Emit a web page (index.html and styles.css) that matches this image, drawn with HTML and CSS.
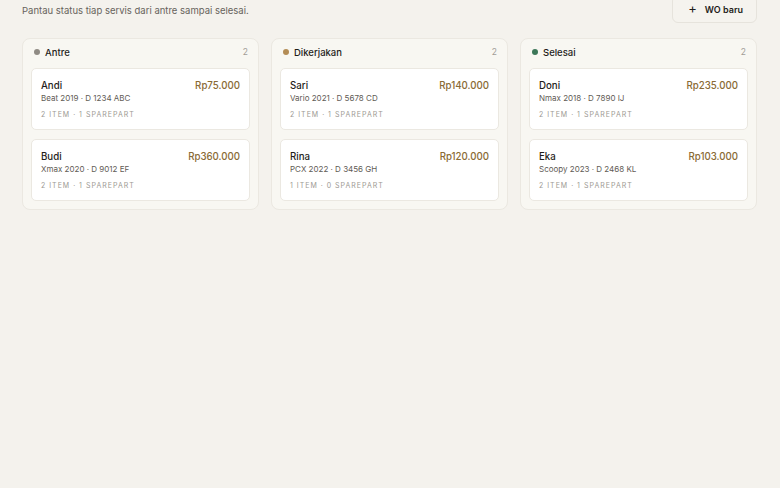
FILE: index.html
```html
<!DOCTYPE html>
<html lang="id">
  <head>
    <meta charset="UTF-8" />
    <meta name="viewport" content="width=device-width, initial-scale=1.0" />
    <title>Work Order</title>
    <link rel="stylesheet" href="styles.css">
  </head>
  <body>
    <div class="page">
      <div class="toolbar">
        <p class="lead">Pantau status tiap servis dari antre sampai selesai.</p>
        <button class="btn-new"><span class="plus">+</span> WO baru</button>
      </div>

      <div class="board">
        <div class="column">
          <div class="column-head">
            <span class="dot queue"></span>
            <span class="column-title">Antre</span>
            <span class="count">2</span>
          </div>
          <div class="card">
            <div class="card-top"><span class="name">Andi</span><span class="price">Rp75.000</span></div>
            <div class="vehicle">Beat 2019 · D 1234 ABC</div>
            <div class="meta">2 item · 1 sparepart</div>
          </div>
          <div class="card">
            <div class="card-top"><span class="name">Budi</span><span class="price">Rp360.000</span></div>
            <div class="vehicle">Xmax 2020 · D 9012 EF</div>
            <div class="meta">2 item · 1 sparepart</div>
          </div>
        </div>

        <div class="column">
          <div class="column-head">
            <span class="dot work"></span>
            <span class="column-title">Dikerjakan</span>
            <span class="count">2</span>
          </div>
          <div class="card">
            <div class="card-top"><span class="name">Sari</span><span class="price">Rp140.000</span></div>
            <div class="vehicle">Vario 2021 · D 5678 CD</div>
            <div class="meta">2 item · 1 sparepart</div>
          </div>
          <div class="card">
            <div class="card-top"><span class="name">Rina</span><span class="price">Rp120.000</span></div>
            <div class="vehicle">PCX 2022 · D 3456 GH</div>
            <div class="meta">1 item · 0 sparepart</div>
          </div>
        </div>

        <div class="column">
          <div class="column-head">
            <span class="dot done"></span>
            <span class="column-title">Selesai</span>
            <span class="count">2</span>
          </div>
          <div class="card">
            <div class="card-top"><span class="name">Doni</span><span class="price">Rp235.000</span></div>
            <div class="vehicle">Nmax 2018 · D 7890 IJ</div>
            <div class="meta">2 item · 1 sparepart</div>
          </div>
          <div class="card">
            <div class="card-top"><span class="name">Eka</span><span class="price">Rp103.000</span></div>
            <div class="vehicle">Scoopy 2023 · D 2468 KL</div>
            <div class="meta">2 item · 1 sparepart</div>
          </div>
        </div>
      </div>
    </div>
  </body>
</html>
```

FILE: styles.css
```css
* {
  margin: 0;
  padding: 0;
  box-sizing: border-box;
}
html, body {
  height: 100%;
  background: #f4f2ed;
  font-family: Inter, "Noto Sans", sans-serif;
  color: #1f1d1a;
}
.page {
  padding: 0 23px 0 22px;
}
.toolbar {
  display: flex;
  justify-content: space-between;
  align-items: center;
  margin-top: -5px;
}
.lead {
  font-size: 9.5px;
  line-height: 14px;
  color: #67635c;
  padding-top: 4px;
}
.btn-new {
  display: flex;
  align-items: center;
  gap: 8px;
  height: 28px;
  padding: 0 13px 0 15px;
  border: 1px solid #e6e3dc;
  border-radius: 6px;
  background: #f5f3ee;
  font-family: inherit;
  font-size: 9px;
  font-weight: 600;
  color: #1f1d1a;
}
.plus {
  font-size: 13px;
  font-weight: 400;
  line-height: 1;
  margin-top: -2px;
}
.board {
  display: grid;
  grid-template-columns: repeat(3, 1fr);
  gap: 12px;
  margin-top: 15px;
  align-items: start;
}
.column {
  background: #f8f7f2;
  border: 1px solid #ebe8e1;
  border-radius: 8px;
  padding: 0 8px 8px;
  display: flex;
  flex-direction: column;
  gap: 9px;
}
.column-head {
  display: flex;
  align-items: center;
  height: 26px;
  margin-bottom: -6px;
  padding: 0 2px 0 3px;
}
.dot {
  width: 6px;
  height: 6px;
  border-radius: 50%;
  margin-right: 5px;
}
.dot.queue { background: #8f8b84; }
.dot.work { background: #b38c55; }
.dot.done { background: #3c7758; }
.column-title {
  font-size: 9.5px;
  font-weight: 500;
  flex: 1;
}
.count {
  font-size: 8.5px;
  color: #a19d96;
}
.card {
  background: #fff;
  border: 1px solid #ebe8e1;
  border-radius: 5px;
  padding: 10px 9px 9px;
  display: flex;
  flex-direction: column;
}
.card-top {
  display: flex;
  justify-content: space-between;
  align-items: baseline;
  line-height: 13px;
}
.name {
  font-size: 9.7px;
  font-weight: 500;
}
.price {
  font-size: 9.7px;
  font-weight: 500;
  color: #8a6a34;
}
.vehicle {
  font-size: 8px;
  line-height: 12px;
  color: #5f5b55;
}
.meta {
  font-size: 7px;
  line-height: 10px;
  text-transform: uppercase;
  letter-spacing: 1px;
  color: #9d9993;
  margin-top: 6px;
}
```
